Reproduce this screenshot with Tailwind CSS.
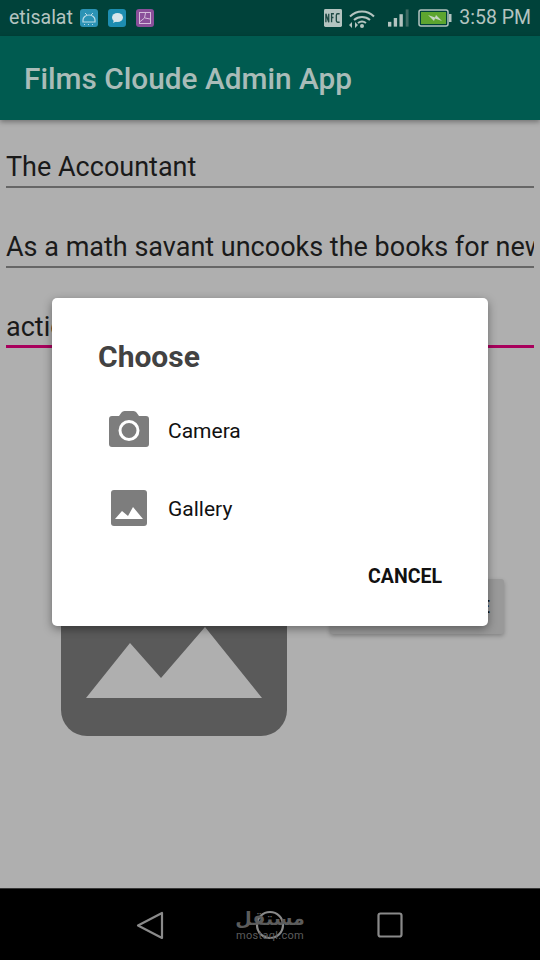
<!DOCTYPE html>
<html lang="en">
<head>
    <meta charset="UTF-8">
    <meta name="viewport" content="width=device-width, initial-scale=1.0">
    <title>Films Cloude Admin App</title>
    <script src="https://cdn.jsdelivr.net/npm/@tailwindcss/browser@4"></script>
</head>
<body class="bg-black">
<div class="relative w-[540px] h-[960px] overflow-hidden flex flex-col font-['Roboto',sans-serif] bg-[#afafaf]">

    <!-- Status bar -->
    <div class="h-[36px] shrink-0 bg-[#00423a] flex items-center pl-[9px] pr-[9px] text-[#b4c4c0]">
        <span class="text-[19.500px] leading-none">etisalat</span>
        <div class="flex items-center gap-[10px] ml-[7px]">
            <svg width="18" height="18" viewBox="0 0 18 18"><rect width="18" height="18" rx="3" fill="#2b93b5"/><path d="M3 11a6 5 0 0 1 12 0v2H3z" fill="none" stroke="#b9dbe6" stroke-width="1.2"/><path d="M5 4l2 2M13 4l-2 2" stroke="#b9dbe6"/><path d="M4 15.500h1M8 15.500h1M12 15.500h1" stroke="#b9dbe6"/></svg>
            <svg width="18" height="18" viewBox="0 0 18 18"><rect width="18" height="18" rx="3" fill="#1d8db0"/><ellipse cx="9.500" cy="8.500" rx="5.500" ry="4.500" fill="#d8e6ea"/><path d="M6 11l-1 3 4-2z" fill="#d8e6ea"/></svg>
            <svg width="18" height="18" viewBox="0 0 18 18"><rect width="18" height="18" rx="3" fill="#8a4f9a"/><rect x="3.500" y="3.500" width="11" height="11" fill="none" stroke="#d4bcdb"/><path d="M3.500 13l5-4 1-5M9 9l5 1" fill="none" stroke="#d4bcdb"/></svg>
        </div>
        <div class="ml-auto flex items-center">
            <!-- nfc -->
            <svg width="18" height="18" viewBox="0 0 19 19"><rect width="19" height="19" rx="1.500" fill="#b4c4c0"/><path d="M2 14V5l3 9V5M8 14V5h2.500M8 9h2M16.500 5H14.500q-1.500 0-1.500 1.500v6q0 1.500 1.500 1.500h2" fill="none" stroke="#1f4a44" stroke-width="1.400"/></svg>
            <!-- wifi -->
            <svg class="ml-[6px]" width="28" height="20" viewBox="0 0 28 20"><path d="M2 8.500a17 17 0 0 1 24 0M6 12a12 12 0 0 1 16 0M10 15a6.500 6.500 0 0 1 8 0" fill="none" stroke="#b4c4c0" stroke-width="2"/><circle cx="14" cy="18" r="2" fill="#b4c4c0"/><path d="M4 14l-3 3 3 3zM7 14l3 3-3 3z" fill="#b4c4c0"/></svg>
            <!-- signal -->
            <svg class="ml-[12px]" width="22" height="19" viewBox="0 0 23 19"><rect x="0" y="13" width="3.500" height="5" fill="#b4c4c0"/><rect x="6" y="9" width="3.500" height="9" fill="#b4c4c0"/><rect x="12" y="5" width="3.500" height="13" fill="#b4c4c0"/><rect x="18.500" y="0" width="3" height="18" fill="#3f6b64"/></svg>
            <!-- battery -->
            <svg class="ml-[8px]" width="34" height="18" viewBox="0 0 34 18"><rect x="1" y="1" width="29" height="16" rx="2" fill="none" stroke="#b4c4c0" stroke-width="1.500"/><rect x="3" y="3" width="25" height="12" fill="#5da52f"/><rect x="31" y="5" width="2.500" height="8" fill="#b4c4c0"/><path d="M10 6l7 2.500 1-2.500 6 6-7-2.500-1 2.500z" fill="#c6d6c4"/></svg>
            <span class="ml-[7px] text-[19.500px] leading-none">3:58 PM</span>
        </div>
    </div>

    <!-- App bar -->
    <div class="h-[84px] shrink-0 bg-[#005b50] flex items-center pl-[24px] pt-[2px] shadow-[0_2px_5px_rgba(0,0,0,0.35)] relative z-10">
        <span class="text-[29.800px] font-medium text-[#a9bcb8] leading-none">Films Cloude Admin App</span>
    </div>

    <!-- Form -->
    <div class="flex-1 min-h-0 px-[6px]">
        <div class="h-[68px] border-b-[2px] border-[#666666] flex items-end pb-[1px] overflow-hidden">
            <span class="text-[27px] leading-[36px] text-[#1a1a1a] whitespace-nowrap">The Accountant</span>
        </div>
        <div class="mt-[12px] h-[68px] border-b-[2px] border-[#666666] flex items-end pb-[1px] overflow-hidden">
            <span class="text-[27px] leading-[36px] text-[#1a1a1a] whitespace-nowrap">As a math savant uncooks the books for new clients</span>
        </div>
        <div class="mt-[12px] h-[68px] border-b-[3px] border-[#a8005c] flex items-end overflow-hidden">
            <span class="text-[27px] leading-[36px] text-[#1a1a1a] whitespace-nowrap">action</span>
        </div>

        <div class="flex items-start mt-[162px] pl-[55px]">
            <svg width="226" height="226" viewBox="0 0 226 226" class="shrink-0"><rect width="226" height="226" rx="26" fill="#5a5a5a"/><path d="M25 188L69 133L100 168L144 117L201 188Z" fill="#afafaf"/></svg>
            <div class="ml-[43px] mt-[69px] w-[174px] h-[55px] bg-[#999999] rounded-[3px] shadow-[0_2px_4px_rgba(0,0,0,0.25)] flex items-center justify-end pr-[14px]">
                <span class="text-[19px] font-medium text-[#111111] leading-none">E</span>
            </div>
        </div>
    </div>

    <!-- Nav bar -->
    <div class="relative h-[72px] shrink-0 bg-black border-t border-[#8a8a8a]/40 flex items-center justify-center gap-[80px] pt-[1px]">
        <svg width="40" height="40" viewBox="0 0 40 40"><path d="M32 8v25L8 20.500z" fill="none" stroke="#8a8a8a" stroke-width="2.200" stroke-linejoin="round"/></svg>
        <svg width="40" height="40" viewBox="0 0 40 40"><circle cx="20" cy="20" r="13" fill="none" stroke="#8a8a8a" stroke-width="2.200"/></svg>
        <svg width="40" height="40" viewBox="0 0 40 40"><rect x="8.500" y="8.500" width="23" height="23" rx="2" fill="none" stroke="#8a8a8a" stroke-width="2.200"/></svg>
    </div>

    <!-- Watermark -->
    <div class="absolute left-[232px] top-[907px] w-[76px] flex flex-col items-center text-[#5c5c5c]">
        <span class="text-[19px] leading-[23px] font-bold font-['DejaVu_Sans',sans-serif]" dir="rtl" lang="ar">مستقل</span>
        <span class="text-[11px] leading-[11px] font-['Roboto',sans-serif] tracking-[0.3px]">mostaql.com</span>
    </div>

    <!-- Dialog -->
    <div class="absolute left-[52px] top-[298px] w-[436px] h-[328px] bg-white rounded-[5px] shadow-[0_3px_10px_rgba(0,0,0,0.4)] flex flex-col pl-[46px] pr-[46px]">
        <div class="mt-[41px] text-[30px] leading-[36px] font-bold text-[#424242]">Choose</div>
        <div class="mt-[36px] flex items-center h-[40px]">
            <svg class="ml-[11px] mb-[4px] shrink-0" width="40" height="36" viewBox="0 0 40 36"><path d="M3 5h7l2.500-3.500q1-1.500 3-1.500h9q2 0 3 1.500L30 5h7q3 0 3 3v25q0 3-3 3H3q-3 0-3-3V8q0-3 3-3z" fill="#7d7d7d"/><circle cx="20" cy="19.500" r="9" fill="none" stroke="#ffffff" stroke-width="3"/></svg>
            <span class="ml-[19px] text-[21px] text-[#111111] leading-none">Camera</span>
        </div>
        <div class="mt-[38px] flex items-center h-[40px]">
            <svg class="ml-[13px] mb-[2px] shrink-0" width="36" height="36" viewBox="0 0 36 36"><rect width="36" height="36" rx="3" fill="#7d7d7d"/><path d="M4 29L11 21L17 26L22 17L32 29Z" fill="#ffffff"/></svg>
            <span class="ml-[21px] text-[21px] text-[#111111] leading-none">Gallery</span>
        </div>
        <div class="mt-[38px] flex justify-end">
            <span class="text-[19.500px] font-bold text-[#111111] leading-none">CANCEL</span>
        </div>
    </div>
</div>
</body>
</html>
